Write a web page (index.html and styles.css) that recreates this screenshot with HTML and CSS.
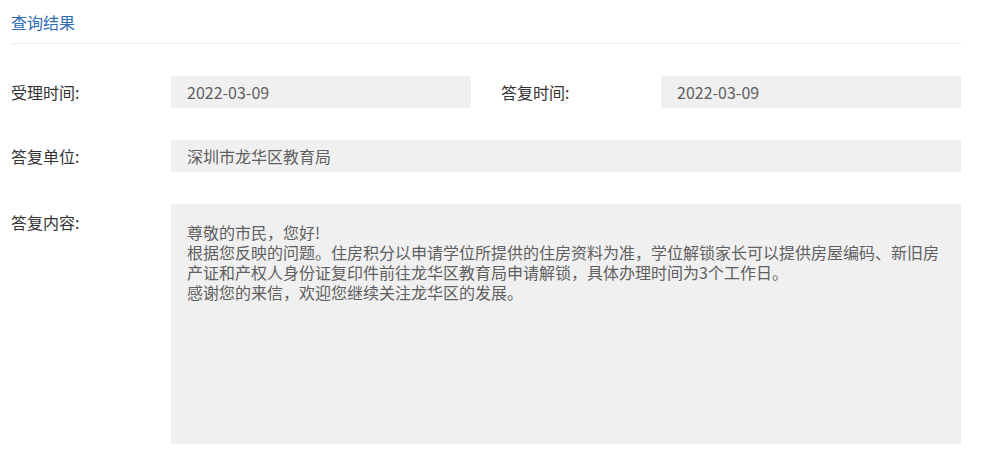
FILE: index.html
```html
<!DOCTYPE html>
<html>
	<head>
		<meta charset="UTF-8">
		<meta name="viewport" content="width=device-width, initial-scale=1.0">
		<title>查询结果</title>
		<link rel="stylesheet" href="styles.css">
	</head>
	<body>
		<div class="result">
			<div class="resultTitle">查询结果</div>

			<div class="row">
				<div class="field">
					<span class="label">受理时间:</span>
					<span class="value">2022-03-09</span>
				</div>
				<div class="field">
					<span class="label">答复时间:</span>
					<span class="value">2022-03-09</span>
				</div>
			</div>

			<div class="row">
				<div class="field wide">
					<span class="label">答复单位:</span>
					<span class="value">深圳市龙华区教育局</span>
				</div>
			</div>

			<div class="row">
				<div class="field wide top">
					<span class="label">答复内容:</span>
					<div class="value content">
						<p>尊敬的市民，您好!</p>
						<p>根据您反映的问题。住房积分以申请学位所提供的住房资料为准，学位解锁家长可以提供房屋编码、新旧房产证和产权人身份证复印件前往龙华区教育局申请解锁，具体办理时间为3个工作日。</p>
						<p>感谢您的来信，欢迎您继续关注龙华区的发展。</p>
					</div>
				</div>
			</div>
		</div>
	</body>
</html>
```

FILE: styles.css
```css
* {
	box-sizing: border-box;
}

body {
	margin: 0;
	padding: 0;
	font-family: "Noto Sans CJK SC", "Noto Sans", sans-serif;
	font-size: 16px;
	color: #333;
	background-color: #fff;
}

.result {
	width: 950px;
	margin-left: 11px;
}

.resultTitle {
	color: #2e6db4;
	line-height: 22px;
	padding: 11px 0 10px;
	border-bottom: 1px solid #eeeeee;
	margin-bottom: 32px;
}

.row {
	display: flex;
	flex-flow: row nowrap;
	justify-content: space-between;
	margin-bottom: 32px;
}

.row:last-child {
	margin-bottom: 0;
}

.field {
	flex: 0 0 460px;
	display: flex;
	flex-flow: row nowrap;
	align-items: center;
}

.field.wide {
	flex: 1 1 auto;
}

.field.top {
	align-items: flex-start;
}

.label {
	flex: 0 0 160px;
	line-height: 32px;
	color: #333;
}

.field.top .label {
	padding-top: 2px;
}

.value {
	flex: 1 1 auto;
	height: 32px;
	line-height: 32px;
	padding: 0 16px;
	background-color: #f0f0f0;
	color: #5f5f5f;
}

.value.content {
	height: 240px;
	line-height: 20px;
	padding: 18px 16px;
}

.content p {
	margin: 0;
}
```
